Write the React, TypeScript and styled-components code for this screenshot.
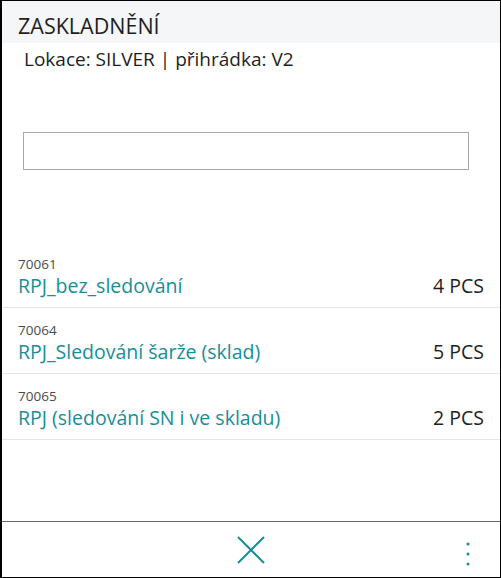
import styled, { createGlobalStyle } from 'styled-components';

type Item = {
  no: string;
  name: string;
  qty: string;
};

const items: Item[] = [
  { no: '70061', name: 'RPJ_bez_sledování', qty: '4 PCS' },
  { no: '70064', name: 'RPJ_Sledování šarže (sklad)', qty: '5 PCS' },
  { no: '70065', name: 'RPJ (sledování SN i ve skladu)', qty: '2 PCS' },
];

const App = () => {
  return (
    <>
      <GlobalStyle />
      <Frame>
        <Header>ZASKLADNĚNÍ</Header>
        <Location>Lokace: SILVER | přihrádka: V2</Location>
        <SearchBox type="text" />
        <List>
          {items.map((item) => (
            <Row key={item.no}>
              <ItemNo>{item.no}</ItemNo>
              <RowMain>
                <ItemName>{item.name}</ItemName>
                <Qty>{item.qty}</Qty>
              </RowMain>
            </Row>
          ))}
        </List>
        <Footer>
          <IconButton aria-label="Zavřít">
            <svg width="28" height="28" viewBox="0 0 28 28">
              <path d="M1 1 L27 27 M27 1 L1 27" stroke="#178e99" strokeWidth="2" fill="none" />
            </svg>
          </IconButton>
          <MoreButton aria-label="Další">
            <svg width="4" height="24" viewBox="0 0 4 24">
              <circle cx="2" cy="2" r="1.5" fill="#178e99" />
              <circle cx="2" cy="12" r="1.5" fill="#178e99" />
              <circle cx="2" cy="22" r="1.5" fill="#178e99" />
            </svg>
          </MoreButton>
        </Footer>
      </Frame>
    </>
  );
};

export default App;

const GlobalStyle = createGlobalStyle`
  * { box-sizing: border-box; }
  html, body {
    margin: 0;
    padding: 0;
    background: #fff;
  }
  body {
    font-family: 'Open Sans', 'Noto Sans', sans-serif;
    color: #212121;
  }
`;

const Frame = styled.div`
  width: 501px;
  height: 578px;
  border: 1px solid #000;
  border-left-width: 2px;
  display: flex;
  flex-direction: column;
  background: #fff;
`;

const Header = styled.div`
  height: 42px;
  flex-shrink: 0;
  background: #f5f6f8;
  padding: 11px 0 0 16px;
  font-size: 21.5px;
  line-height: 28px;
  color: #1e1e1e;
`;

const Location = styled.div`
  padding: 4px 0 0 22px;
  font-size: 19px;
  line-height: 24px;
  color: #1e1e1e;
`;

const SearchBox = styled.input`
  margin: 61px 0 0 21px;
  width: 446px;
  height: 38px;
  border: 1px solid #a8a8a8;
  border-radius: 0;
  outline: none;
  background: #fff;
  flex-shrink: 0;
`;

const List = styled.div`
  margin-top: 72px;
  flex: 1;
  display: flex;
  flex-direction: column;
`;

const Row = styled.div`
  height: 66px;
  padding: 13px 16px 0 16px;
  border-bottom: 1px solid #e6e6e6;
  display: flex;
  flex-direction: column;
`;

const ItemNo = styled.div`
  font-size: 13.5px;
  line-height: 18px;
  color: #4a4a4a;
`;

const RowMain = styled.div`
  display: flex;
  justify-content: space-between;
  align-items: baseline;
`;

const ItemName = styled.div`
  font-size: 19.5px;
  line-height: 26px;
  color: #178e99;
`;

const Qty = styled.div`
  font-size: 19.5px;
  line-height: 26px;
  color: #1e1e1e;
`;

const Footer = styled.div`
  height: 56px;
  flex-shrink: 0;
  border-top: 1px solid #666;
  position: relative;
  display: flex;
  align-items: center;
  justify-content: center;
`;

const IconButton = styled.button`
  border: none;
  background: none;
  padding: 0;
  display: flex;
  cursor: pointer;
`;

const MoreButton = styled(IconButton)`
  position: absolute;
  right: 30px;
  top: 20px;
`;
